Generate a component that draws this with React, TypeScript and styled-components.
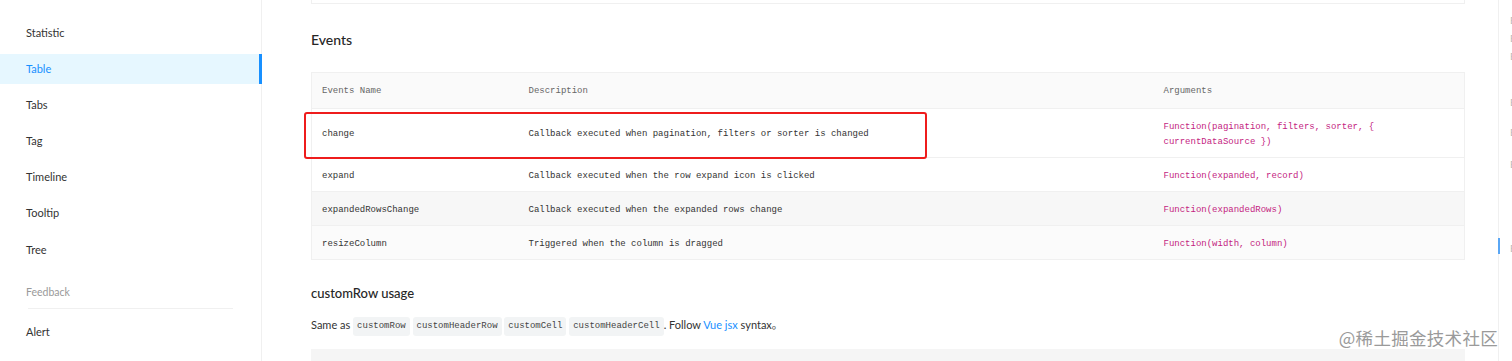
import React from 'react';
import styled, { createGlobalStyle } from 'styled-components';

const GlobalStyle = createGlobalStyle`
  html, body {
    margin: 0;
    padding: 0;
    background: #fff;
  }
  body {
    font-family: Lato, "Open Sans", "Noto Sans CJK SC", sans-serif;
    color: #333;
  }
`;

const MONO = '"Liberation Mono", "DejaVu Sans Mono", monospace';

const Page = styled.div`
  position: relative;
  display: flex;
  width: 1512px;
  height: 361px;
  overflow: hidden;
`;

const Sidebar = styled.nav`
  width: 261px;
  flex: none;
  border-right: 1px solid #f0f0f0;
`;

const MenuList = styled.ul`
  list-style: none;
  margin: -18.5px 0 0;
  padding: 0;
`;

const MenuItem = styled.li<{ active?: boolean }>`
  position: relative;
  height: 30px;
  line-height: 30px;
  margin-bottom: 6.17px;
  padding-left: 26px;
  font-size: 11px;
  color: ${({ active }) => (active ? '#1890ff' : '#333')};
  background: ${({ active }) => (active ? '#e6f7ff' : 'transparent')};
  &:first-child {
    line-height: 22px;
  }
  ${({ active }) =>
    active
      ? `&::after {
    content: '';
    position: absolute;
    top: 0;
    right: -1px;
    bottom: 0;
    width: 3px;
    background: #1890ff;
  }`
      : ''}
`;

const GroupTitle = styled.li`
  margin-top: 19px;
  padding-left: 26px;
  font-size: 10.5px;
  line-height: 16px;
  color: #999;
`;

const GroupDivider = styled.li`
  height: 1px;
  width: 205px;
  margin: 8px 28px 8px 28px;
  background: #f0f0f0;
`;

const Main = styled.main`
  flex: 1;
  min-width: 0;
  padding: 0 33px 0 49px;
`;

const PrevBlock = styled.div`
  height: 3px;
  border: 1px solid #f0f0f0;
  border-top: none;
`;

const SectionTitle = styled.h2<{ small?: boolean }>`
  margin: ${({ small }) => (small ? '24px 0 0' : '26px 0 0')};
  font-size: ${({ small }) => (small ? '13px' : '14px')};
  line-height: ${({ small }) => (small ? '18px' : '20px')};
  font-weight: 500;
  color: #262626;
`;

const TableWrap = styled.div`
  position: relative;
  margin-top: 22px;
`;

const Table = styled.table`
  width: 100%;
  border-collapse: collapse;
  border: 1px solid #f0f0f0;
  table-layout: fixed;
  font-family: ${MONO};
  font-size: 9px;
  line-height: 15px;
`;

const Th = styled.th`
  padding: 11px 10px 9px;
  text-align: left;
  font-weight: 400;
  color: #666;
  background: #fafafa;
  border-bottom: 1px solid #f0f0f0;
`;

const Row = styled.tr<{ shade?: string }>`
  background: ${({ shade }) => shade || '#fff'};
`;

const Td = styled.td<{ fn?: boolean }>`
  padding: 10.5px 10px 7.5px;
  vertical-align: middle;
  color: ${({ fn }) => (fn ? '#c41d7f' : '#333')};
  border-bottom: 1px solid #f0f0f0;
`;

const Highlight = styled.div`
  position: absolute;
  left: -7px;
  top: 40px;
  width: 623px;
  height: 47px;
  box-sizing: border-box;
  border: 2px solid #ee1c1c;
  border-radius: 3px;
  pointer-events: none;
`;

const Paragraph = styled.p`
  margin: 13px 0 0;
  font-size: 11px;
  line-height: 20px;
  color: #333;
`;

const Code = styled.code`
  display: inline-block;
  padding: 0 4px;
  height: 19px;
  line-height: 19px;
  vertical-align: middle;
  font-family: ${MONO};
  font-size: 9px;
  color: #444;
  background: #f2f4f5;
  border-radius: 3px;
`;

const Link = styled.a`
  color: #1890ff;
  text-decoration: none;
`;

const CodeBlock = styled.div`
  margin-top: 13px;
  height: 40px;
  background: #f5f5f5;
`;

const Anchor = styled.aside`
  position: relative;
  width: 13px;
  flex: none;
  border-left: 1px solid #f0f0f0;
`;

const AnchorInk = styled.span`
  position: absolute;
  left: -1px;
  top: 238px;
  width: 2px;
  height: 16px;
  background: #5aa7f5;
`;

const AnchorLink = styled.div<{ top: number }>`
  position: absolute;
  left: 11px;
  top: ${({ top }) => top}px;
  font-size: 10px;
  color: #bbb;
  white-space: nowrap;
`;

const Watermark = styled.div`
  position: absolute;
  right: 14px;
  bottom: 13px;
  font-family: "Noto Sans CJK SC", sans-serif;
  font-size: 17.5px;
  line-height: 20px;
  color: #9a9a9a;
  letter-spacing: 0.3px;
`;

const menu = ['Spin', 'Statistic', 'Table', 'Tabs', 'Tag', 'Timeline', 'Tooltip', 'Tree'];

const events = [
  {
    name: 'change',
    desc: 'Callback executed when pagination, filters or sorter is changed',
    args: 'Function(pagination, filters, sorter, { currentDataSource })',
  },
  { name: 'expand', desc: 'Callback executed when the row expand icon is clicked', args: 'Function(expanded, record)' },
  {
    name: 'expandedRowsChange',
    desc: 'Callback executed when the expanded rows change',
    args: 'Function(expandedRows)',
    shade: '#f7f7f7',
  },
  {
    name: 'resizeColumn',
    desc: 'Triggered when the column is dragged',
    args: 'Function(width, column)',
    shade: '#fbfbfb',
  },
];

const anchorTops = [14, 32, 50, 96, 126, 158, 242];

export default function App() {
  return (
    <>
      <GlobalStyle />
      <Page>
        <Sidebar>
          <MenuList>
            {menu.map(item => (
              <MenuItem key={item} active={item === 'Table'}>
                {item}
              </MenuItem>
            ))}
            <GroupTitle>Feedback</GroupTitle>
            <GroupDivider />
            <MenuItem>Alert</MenuItem>
          </MenuList>
        </Sidebar>

        <Main>
          <PrevBlock />
          <SectionTitle>Events</SectionTitle>
          <TableWrap>
            <Table>
              <colgroup>
                <col style={{ width: 207 }} />
                <col style={{ width: 635 }} />
                <col />
              </colgroup>
              <thead>
                <tr>
                  <Th>Events Name</Th>
                  <Th>Description</Th>
                  <Th>Arguments</Th>
                </tr>
              </thead>
              <tbody>
                {events.map(ev => (
                  <Row key={ev.name} shade={ev.shade}>
                    <Td>{ev.name}</Td>
                    <Td>{ev.desc}</Td>
                    <Td fn>{ev.args}</Td>
                  </Row>
                ))}
              </tbody>
            </Table>
            <Highlight />
          </TableWrap>

          <SectionTitle small>customRow usage</SectionTitle>
          <Paragraph>
            Same as <Code>customRow</Code> <Code>customHeaderRow</Code> <Code>customCell</Code>{' '}
            <Code>customHeaderCell</Code>. Follow <Link>Vue jsx</Link> syntax。
          </Paragraph>
          <CodeBlock />
        </Main>

        <Anchor>
          <AnchorInk />
          {anchorTops.map(t => (
            <AnchorLink key={t} top={t}>
              Examples
            </AnchorLink>
          ))}
        </Anchor>

        <Watermark>@稀土掘金技术社区</Watermark>
      </Page>
    </>
  );
}
